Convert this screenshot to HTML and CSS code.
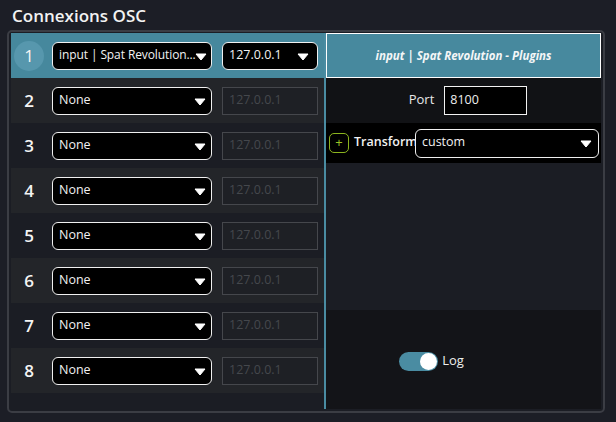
FILE: index.html
```html
<!DOCTYPE html>
<html>
<head>
<meta charset="utf-8">
<link rel="stylesheet" href="styles.css">
</head>
<body>
<h1 class="title">Connexions OSC</h1>
<div class="frame">
  <div class="list">
    <div class="row active">
      <div class="num badge">1</div>
      <div class="select first-select"><span class="sel-text tight">input | Spat Revolution...</span><svg class="arrow" viewBox="0 0 12 8"><path d="M1 1 H11 L6 7 Z" fill="#fff" stroke="#fff" stroke-linejoin="round" stroke-width="1"/></svg></div>
      <div class="select ip-select"><span class="sel-text">127.0.0.1</span><svg class="arrow" viewBox="0 0 12 8"><path d="M1 1 H11 L6 7 Z" fill="#fff" stroke="#fff" stroke-linejoin="round" stroke-width="1"/></svg></div>
    </div>
    <div class="row even">
      <div class="num">2</div>
      <div class="select"><span class="sel-text">None</span><svg class="arrow" viewBox="0 0 12 8"><path d="M1 1 H11 L6 7 Z" fill="#fff" stroke="#fff" stroke-linejoin="round" stroke-width="1"/></svg></div>
      <div class="ip">127.0.0.1</div>
    </div>
    <div class="row">
      <div class="num">3</div>
      <div class="select"><span class="sel-text">None</span><svg class="arrow" viewBox="0 0 12 8"><path d="M1 1 H11 L6 7 Z" fill="#fff" stroke="#fff" stroke-linejoin="round" stroke-width="1"/></svg></div>
      <div class="ip">127.0.0.1</div>
    </div>
    <div class="row even">
      <div class="num">4</div>
      <div class="select"><span class="sel-text">None</span><svg class="arrow" viewBox="0 0 12 8"><path d="M1 1 H11 L6 7 Z" fill="#fff" stroke="#fff" stroke-linejoin="round" stroke-width="1"/></svg></div>
      <div class="ip">127.0.0.1</div>
    </div>
    <div class="row">
      <div class="num">5</div>
      <div class="select"><span class="sel-text">None</span><svg class="arrow" viewBox="0 0 12 8"><path d="M1 1 H11 L6 7 Z" fill="#fff" stroke="#fff" stroke-linejoin="round" stroke-width="1"/></svg></div>
      <div class="ip">127.0.0.1</div>
    </div>
    <div class="row even">
      <div class="num">6</div>
      <div class="select"><span class="sel-text">None</span><svg class="arrow" viewBox="0 0 12 8"><path d="M1 1 H11 L6 7 Z" fill="#fff" stroke="#fff" stroke-linejoin="round" stroke-width="1"/></svg></div>
      <div class="ip">127.0.0.1</div>
    </div>
    <div class="row">
      <div class="num">7</div>
      <div class="select"><span class="sel-text">None</span><svg class="arrow" viewBox="0 0 12 8"><path d="M1 1 H11 L6 7 Z" fill="#fff" stroke="#fff" stroke-linejoin="round" stroke-width="1"/></svg></div>
      <div class="ip">127.0.0.1</div>
    </div>
    <div class="row even">
      <div class="num">8</div>
      <div class="select"><span class="sel-text">None</span><svg class="arrow" viewBox="0 0 12 8"><path d="M1 1 H11 L6 7 Z" fill="#fff" stroke="#fff" stroke-linejoin="round" stroke-width="1"/></svg></div>
      <div class="ip">127.0.0.1</div>
    </div>
  </div>
  <div class="divider"></div>
  <div class="detail">
    <div class="detail-head">input | Spat Revolution - Plugins</div>
    <div class="port-row">
      <span class="port-label">Port</span>
      <div class="port-input">8100</div>
    </div>
    <div class="transform-row">
      <div class="plus">+</div>
      <span class="transform-label">Transform</span>
      <div class="select transform-select"><span class="sel-text">custom</span><svg class="arrow" viewBox="0 0 12 8"><path d="M1 1 H11 L6 7 Z" fill="#fff" stroke="#fff" stroke-linejoin="round" stroke-width="1"/></svg></div>
    </div>
    <div class="spacer"></div>
    <div class="log-area">
      <div class="toggle"><div class="knob"></div></div>
      <span class="log-label">Log</span>
    </div>
  </div>
</div>
</body>
</html>
```
FILE: styles.css
```css
* { box-sizing: border-box; }
html, body { margin: 0; padding: 0; }
body {
  background: #1c1e26;
  font-family: "Open Sans", "Noto Sans", sans-serif;
  color: #fff;
  width: 616px;
  height: 422px;
  overflow: hidden;
}
.title {
  margin: 0;
  padding: 4px 0 0 12px;
  height: 30px;
  font-size: 17px;
  font-weight: 600;
  line-height: 23px;
  color: #f2f2f2;
}
.frame {
  margin-left: 7px;
  width: 598px;
  height: 383px;
  border: 2px solid #3b3d44;
  border-radius: 5px;
  padding: 1px 2px 2px 2px;
  background: #1b1d24;
  display: flex;
}
.list {
  width: 313px;
  display: flex;
  flex-direction: column;
}
.row {
  height: 45px;
  display: flex;
  align-items: center;
  padding-left: 3px;
}
.row.even { background: #232529; }
.row.active { background: #46889d; }
.num {
  width: 30px;
  height: 30px;
  margin-right: 8px;
  display: flex;
  align-items: center;
  justify-content: center;
  font-size: 17px;
  font-weight: 600;
  color: #f4f4f4;
}
.badge {
  border-radius: 50%;
  background: #5797ad;
  font-weight: 400;
}
.select {
  width: 160px;
  height: 28px;
  flex: none;
  background: #000;
  border: 1px solid #f0f0f0;
  border-radius: 6px;
  display: flex;
  align-items: center;
  padding: 0 5px 0 6px;
  font-size: 12.5px;
  color: #f2f2f2;
}
.sel-text {
  flex: 1;
  min-width: 0;
  white-space: nowrap;
  line-height: 18px;
  margin-top: -2px;
}
.sel-text.tight {
  font-size: 12px;
  letter-spacing: -0.1px;
}
.first-select { padding-right: 4px; }
.arrow {
  width: 12px;
  height: 8px;
  flex: none;
  margin-top: 2px;
}
.ip-select {
  width: 96px;
  margin-left: 10px;
  padding-right: 8px;
}
.ip {
  width: 96px;
  height: 28px;
  flex: none;
  margin-left: 10px;
  border: 1px solid #45474c;
  background: #1e2025;
  color: #45484d;
  font-size: 12.5px;
  padding: 0 6px;
  line-height: 24px;
}
.divider {
  width: 2px;
  background: #4a8ca2;
}
.detail {
  width: 275px;
  display: flex;
  flex-direction: column;
}
.detail-head {
  height: 45px;
  background: #47899e;
  border: 1px solid #fff;
  display: flex;
  align-items: center;
  justify-content: center;
  font-size: 11.5px;
  font-weight: 700;
  font-style: italic;
  color: #f4f6f7;
}
.port-row {
  height: 45px;
  background: #111215;
  display: flex;
  align-items: center;
  justify-content: center;
  padding-left: 9px;
}
.port-label {
  font-size: 13px;
  color: #e8e8e8;
  margin-right: 10px;
  margin-top: -3px;
}
.port-input {
  width: 83px;
  height: 29px;
  background: #000;
  border: 1px solid #f2f2f2;
  font-size: 12.5px;
  padding: 0 5px;
  line-height: 25px;
  color: #eee;
}
.transform-row {
  height: 40px;
  background: #000;
  display: flex;
  align-items: center;
  padding-left: 3px;
}
.plus {
  width: 20px;
  height: 20px;
  flex: none;
  border: 1px solid #8bb41e;
  border-radius: 5px;
  color: #9cc426;
  font-size: 13px;
  line-height: 16px;
  text-align: center;
  margin-right: 5px;
}
.transform-label {
  font-size: 12.5px;
  font-weight: 600;
  color: #f2f2f2;
  margin-right: 1px;
  margin-top: -3px;
  width: 60px;
  white-space: nowrap;
}
.transform-select {
  width: 184px;
  height: 29px;
  padding-right: 6px;
  border-radius: 6px;
}
.spacer { flex: 1; }
.log-area {
  height: 99px;
  background: #131418;
  display: flex;
  align-items: center;
  justify-content: center;
  padding-right: 64px;
  padding-top: 4px;
}
.toggle {
  width: 39px;
  height: 19px;
  border-radius: 10px;
  background: #4a8ca2;
  position: relative;
  margin-right: 4px;
}
.knob {
  position: absolute;
  right: 1px;
  top: 1px;
  width: 17px;
  height: 17px;
  border-radius: 50%;
  background: #fff;
}
.log-label {
  font-size: 13px;
  color: #eee;
  margin-top: -3px;
}
```
